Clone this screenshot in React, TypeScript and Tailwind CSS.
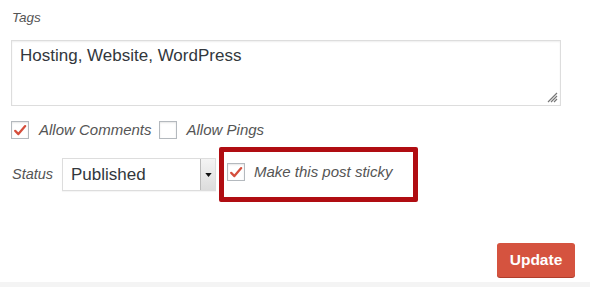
import React from 'react';

const Check = ({ checked }: { checked?: boolean }) => (
  <span className="w-[18px] h-[18px] border border-[#b4b9be] bg-white shadow-[inset_0_1px_2px_rgba(0,0,0,0.1)] flex items-center justify-center shrink-0">
    {checked && (
      <svg viewBox="0 0 20 20" className="w-[17px] h-[17px]">
        <path d="M4 10.5 L8 14.5 L16.5 4.5" fill="none" stroke="#d54e3c" strokeWidth="2.8" strokeLinecap="round" strokeLinejoin="round" />
      </svg>
    )}
  </span>
);

export default function App() {
  return (
    <div className="w-[590px] h-[287px] bg-white text-[#32373c] font-['Liberation_Sans',Arial,sans-serif] relative overflow-hidden">
      <div className="pl-[11px] pr-[30px] pt-[9px]">
        <p className="text-[13.5px] italic text-[#555] leading-[18px] pl-[1px]">Tags</p>
        <div className="mt-[13px] w-[550px] h-[66px] border border-[#ddd] shadow-[inset_0_1px_2px_rgba(0,0,0,0.07)] relative px-[8px] pt-[3px]">
          <span className="text-[17px] leading-[22px] text-[#32373c]">Hosting, Website, WordPress</span>
          <svg viewBox="0 0 12 12" className="absolute right-[2px] bottom-[2px] w-[12px] h-[12px]">
            <path d="M11 2 L2 11 M11 5 L5 11 M11 8 L8 11" stroke="#777" strokeWidth="1.2" />
          </svg>
        </div>
        <div className="flex items-center mt-[15px] h-[18px]">
          <Check checked />
          <span className="ml-[10px] text-[15px] italic text-[#555]">Allow Comments</span>
          <span className="ml-[7px]"><Check /></span>
          <span className="ml-[10px] text-[15px] italic text-[#555]">Allow Pings</span>
        </div>
        <div className="flex items-center mt-[8px]">
          <span className="text-[14.5px] italic text-[#555] pl-[1px] w-[51px]">Status</span>
          <div className="w-[154px] h-[33px] border border-[#ddd] flex items-stretch shadow-[0_1px_1px_rgba(0,0,0,0.04)]">
            <span className="flex-1 text-[17px] leading-[31px] pl-[8px] text-[#32373c]">Published</span>
            <span className="w-[15px] border-l border-[#bbb] bg-gradient-to-b from-[#f4f4f4] to-[#dcdcdc] flex items-center justify-center">
              <svg viewBox="0 0 8 5" className="w-[7px] h-[4px]"><path d="M0 0 H8 L4 5 Z" fill="#111" /></svg>
            </span>
          </div>
          <div className="ml-[3px] w-[199px] h-[55px] border-[5px] border-[#b00d12] rounded-[2px] flex items-center pl-[3px] pb-[5px]">
            <Check checked />
            <span className="ml-[9px] text-[15px] italic text-[#555]">Make this post sticky</span>
          </div>
        </div>
      </div>
      <div className="absolute left-0 right-0 bottom-0 h-[5px] bg-[#f4f4f4]" />
      <button className="absolute left-[497px] top-[243px] w-[78px] h-[34px] bg-[#d5533f] rounded-[3px] text-white font-bold text-[15.5px] leading-[34px] text-center shadow-[0_1px_0_#b03d2c]">
        Update
      </button>
    </div>
  );
}
